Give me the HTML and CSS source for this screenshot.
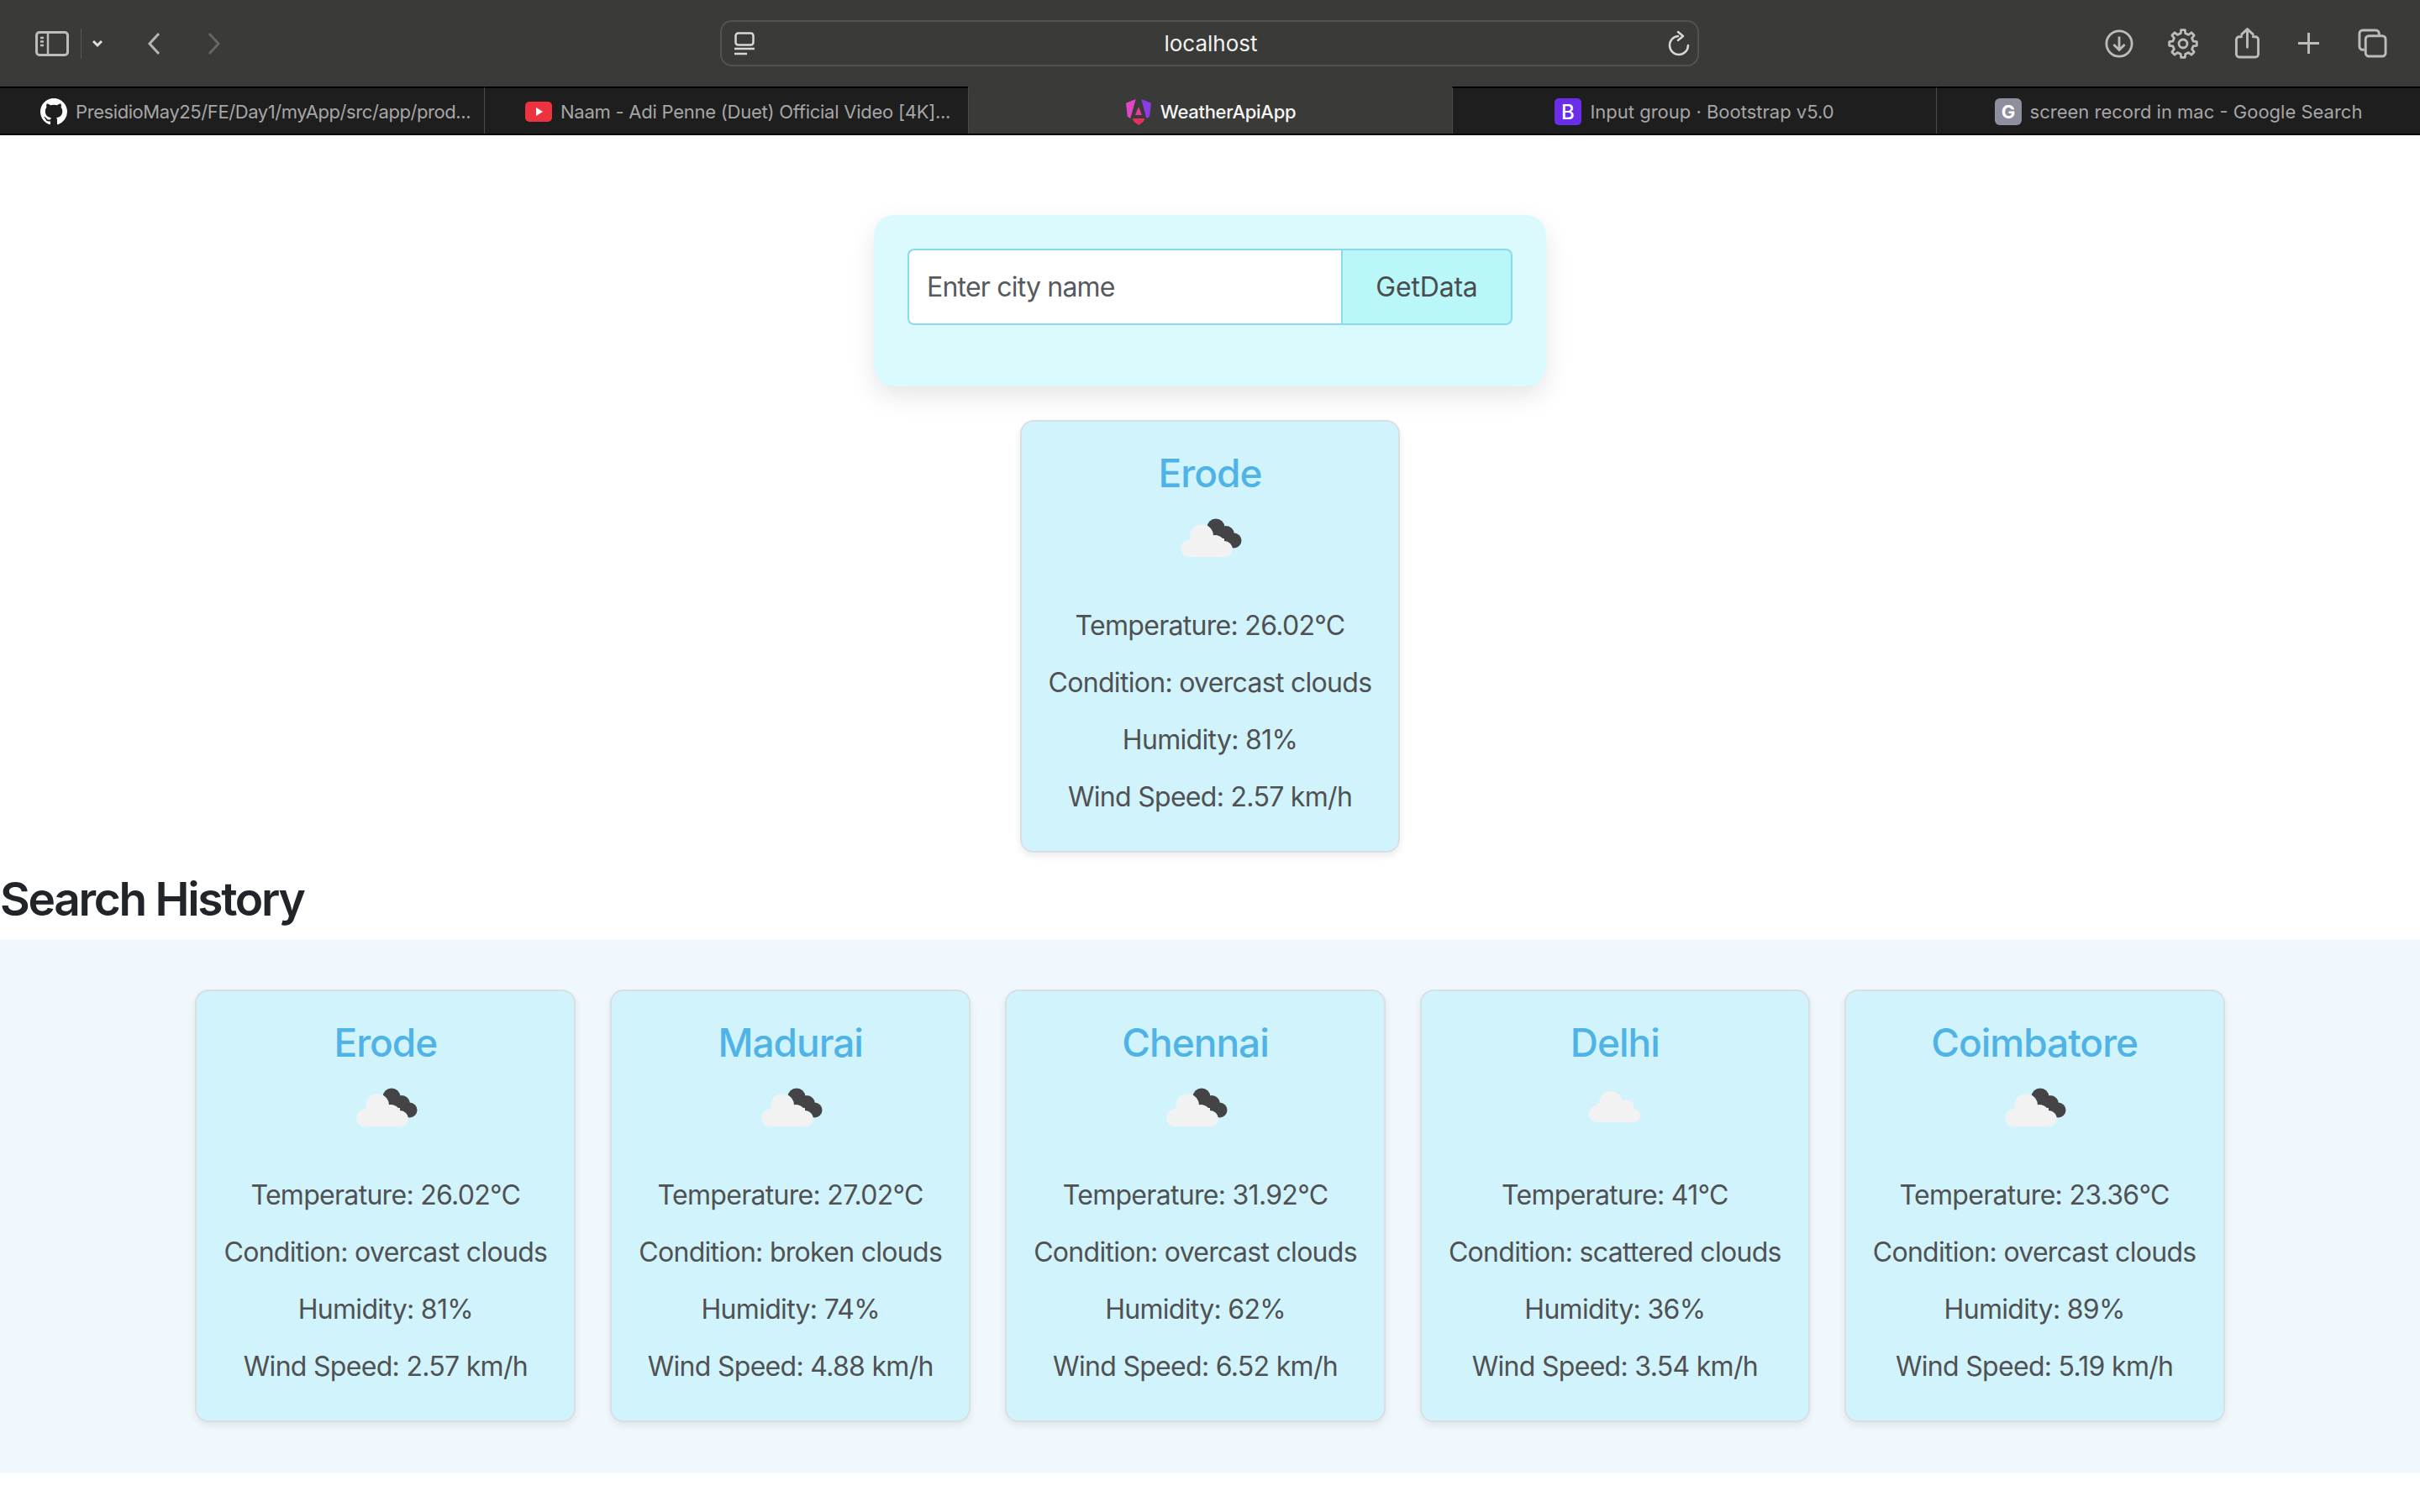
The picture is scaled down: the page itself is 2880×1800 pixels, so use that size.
FILE: index.html
```html
<!DOCTYPE html>
<html lang="en">
<head>
<meta charset="utf-8">
<title>WeatherApiApp</title>
<link rel="stylesheet" href="styles.css">
</head>
<body>
<svg class="defs" aria-hidden="true">
  <symbol id="cloud-broken" viewBox="0 0 100 100">
    <g class="dark-cloud"><circle cx="57" cy="37" r="10.500"/><circle cx="69" cy="45" r="10"/><circle cx="78.500" cy="52.500" r="9"/><path d="M50 38 L64 38 L80 58 L70 58Z"/></g>
    <g class="cloud-halo"><circle cx="40" cy="47" r="13"/><circle cx="26" cy="62" r="10"/><circle cx="56" cy="58" r="11"/><circle cx="67" cy="63" r="9"/></g>
    <g class="white-cloud"><circle cx="40" cy="47" r="13"/><circle cx="26" cy="62" r="10"/><circle cx="56" cy="58" r="11"/><circle cx="67" cy="63" r="9"/><rect x="26" y="50" width="41" height="22"/></g>
  </symbol>
  <symbol id="cloud-scattered" viewBox="0 0 100 100">
    <g class="white-cloud"><circle cx="45" cy="44" r="14"/><circle cx="63.500" cy="48" r="8"/><circle cx="72" cy="59" r="8"/><circle cx="28.500" cy="57" r="10"/><rect x="28" y="44" width="44" height="23"/></g>
  </symbol>
</svg>

<header class="browser">
  <div class="toolbar">
    <div class="tool-left">
      <svg class="ic ic-side" viewBox="0 0 40 30"><rect x="1.500" y="1.500" width="37" height="27" rx="3.500"/><path d="M15 2v26M6 8h4M6 12.500h4M6 17h4"/></svg>
      <span class="tool-sep"></span>
      <svg class="ic ic-chev" viewBox="0 0 14 10"><path d="M2 2l5 5 5-5"/></svg>
      <svg class="ic ic-back" viewBox="0 0 16 28"><path d="M14 2L3 14l11 12"/></svg>
      <svg class="ic ic-fwd" viewBox="0 0 16 28"><path d="M2 2l11 12L2 26"/></svg>
    </div>
    <div class="url">
      <svg class="ic ic-page" viewBox="0 0 24 28"><rect x="1.500" y="1.500" width="21" height="14" rx="3"/><path d="M0 20h24M0 26h15"/></svg>
      <span class="url-text">localhost</span>
      <svg class="ic ic-reload" viewBox="0 0 28 34"><path d="M25 19A11 11 0 1 1 13 8"/><path d="M13 3l6 5-6 5"/></svg>
    </div>
    <div class="tool-right">
      <svg class="ic ic-dl" viewBox="0 0 36 36"><circle cx="18" cy="18" r="16"/><path d="M18 9v17M11 19l7 7 7-7"/></svg>
      <svg class="ic ic-gear" viewBox="0 0 36 36"><path d="M15.190 5.820L15.700 1.660H20.300L20.810 5.820L24.620 7.400L27.930 4.820L31.180 8.070L28.600 11.380L30.180 15.190L34.340 15.700V20.300L30.180 20.810L28.600 24.620L31.180 27.930L27.930 31.180L24.620 28.600L20.810 30.180L20.300 34.340H15.700L15.190 30.180L11.380 28.600L8.070 31.180L4.820 27.930L7.400 24.620L5.820 20.810L1.660 20.300V15.700L5.820 15.190L7.400 11.380L4.820 8.070L8.070 4.820L11.380 7.400Z"/><circle cx="18" cy="18" r="5"/></svg>
      <svg class="ic ic-share" viewBox="0 0 30 38"><path d="M8 11H5a3.500 3.500 0 0 0-3.500 3.500v18A3.500 3.500 0 0 0 5 36h20a3.500 3.500 0 0 0 3.500-3.500v-18A3.500 3.500 0 0 0 25 11h-3M15 24V2M8 8l7-6.500L22 8"/></svg>
      <svg class="ic ic-plus" viewBox="0 0 28 28"><path d="M14 1v26M1 14h26"/></svg>
      <svg class="ic ic-tabs" viewBox="0 0 36 36"><path d="M8 26H6a4 4 0 0 1-4-4V6a4 4 0 0 1 4-4h16a4 4 0 0 1 4 4v2"/><rect x="9.500" y="9" width="24.500" height="25" rx="4"/></svg>
    </div>
  </div>
  <nav class="tabs">
    <div class="tab tab-trunc tab-github">
      <svg class="fav" viewBox="0 0 16 16"><path fill="#fff" d="M8 0C3.580 0 0 3.580 0 8c0 3.540 2.290 6.530 5.470 7.590.4.070.55-.17.55-.38 0-.19-.01-.82-.01-1.490-2.010.37-2.530-.49-2.690-.94-.09-.23-.48-.94-.82-1.130-.28-.15-.68-.52-.01-.53.630-.01 1.080.58 1.230.82.720 1.210 1.870.87 2.330.66.070-.52.280-.87.510-1.070-1.780-.2-3.640-.89-3.640-3.950 0-.87.310-1.590.820-2.150-.08-.2-.36-1.020.08-2.120 0 0 .67-.21 2.200.82.640-.18 1.320-.27 2-.27s1.360.09 2 .27c1.530-1.040 2.200-.82 2.200-.82.440 1.100.16 1.920.08 2.120.51.560.82 1.270.82 2.150 0 3.070-1.870 3.750-3.650 3.950.29.250.54.730.54 1.480 0 1.070-.01 1.930-.01 2.200 0 .21.150.46.550.38A8.010 8.010 0 0 0 16 8c0-4.420-3.580-8-8-8z"/></svg>
      <span>PresidioMay25/FE/Day1/myApp/src/app/prod...</span>
    </div>
    <div class="tab tab-trunc tab-video">
      <svg class="fav" viewBox="0 0 32 32"><rect y="4" width="32" height="24" rx="5" fill="#ee3340"/><path d="M13 11l8 5-8 5z" fill="#fff"/></svg>
      <span>Naam - Adi Penne (Duet) Official Video [4K]...</span>
    </div>
    <div class="tab tab-active">
      <svg class="fav" viewBox="0 0 32 32"><path d="M12.700 1L1 5.700 2.700 21.700 6.300 24z" fill="#e346c4"/><path d="M19.300 1L31 5.700 29 21.700 25.300 24z" fill="#8d3be6"/><path d="M16 10l-4 10h8z" fill="#e83a9e"/><path d="M8.700 24h14.600L22 27.700 16 32l-5.700-4.300z" fill="#e8305f"/></svg>
      <span>WeatherApiApp</span>
    </div>
    <div class="tab">
      <svg class="fav" viewBox="0 0 32 32"><rect width="32" height="32" rx="5" fill="#6a2de8"/><text x="16" y="25" class="fav-b">B</text></svg>
      <span>Input group · Bootstrap v5.0</span>
    </div>
    <div class="tab">
      <svg class="fav" viewBox="0 0 32 32"><rect width="32" height="32" rx="6" fill="#8d8f9c"/><text x="16" y="24" class="fav-g">G</text></svg>
      <span>screen record in mac - Google Search</span>
    </div>
  </nav>
</header>

<main class="page">
  <section class="search-wrap">
    <form class="search-box">
      <div class="input-group">
        <input class="city" type="text" placeholder="Enter city name">
        <button class="get" type="button">GetData</button>
      </div>
    </form>
  </section>

  <section class="current">
    <article class="card">
      <h3>Erode</h3>
      <svg class="wx"><use href="#cloud-broken"/></svg>
      <p>Temperature: 26.02°C</p>
      <p>Condition: overcast clouds</p>
      <p>Humidity: 81%</p>
      <p>Wind Speed: 2.57 km/h</p>
    </article>
  </section>

  <h2 class="history-title">Search History</h2>
  <section class="history">
    <article class="card">
      <h3>Erode</h3>
      <svg class="wx"><use href="#cloud-broken"/></svg>
      <p>Temperature: 26.02°C</p>
      <p>Condition: overcast clouds</p>
      <p>Humidity: 81%</p>
      <p>Wind Speed: 2.57 km/h</p>
    </article>
    <article class="card">
      <h3>Madurai</h3>
      <svg class="wx"><use href="#cloud-broken"/></svg>
      <p>Temperature: 27.02°C</p>
      <p>Condition: broken clouds</p>
      <p>Humidity: 74%</p>
      <p>Wind Speed: 4.88 km/h</p>
    </article>
    <article class="card">
      <h3>Chennai</h3>
      <svg class="wx"><use href="#cloud-broken"/></svg>
      <p>Temperature: 31.92°C</p>
      <p>Condition: overcast clouds</p>
      <p>Humidity: 62%</p>
      <p>Wind Speed: 6.52 km/h</p>
    </article>
    <article class="card">
      <h3>Delhi</h3>
      <svg class="wx"><use href="#cloud-scattered"/></svg>
      <p>Temperature: 41°C</p>
      <p>Condition: scattered clouds</p>
      <p>Humidity: 36%</p>
      <p>Wind Speed: 3.54 km/h</p>
    </article>
    <article class="card">
      <h3>Coimbatore</h3>
      <svg class="wx"><use href="#cloud-broken"/></svg>
      <p>Temperature: 23.36°C</p>
      <p>Condition: overcast clouds</p>
      <p>Humidity: 89%</p>
      <p>Wind Speed: 5.19 km/h</p>
    </article>
  </section>
</main>
</body>
</html>
```
FILE: styles.css
```css
* { box-sizing: border-box; }
html, body { margin: 0; padding: 0; }
body {
  width: 2880px;
  height: 1800px;
  overflow: hidden;
  background: #fff;
  font-family: Inter, "Liberation Sans", sans-serif;
}
.defs { position: absolute; width: 0; height: 0; }
.dark-cloud { fill: #444446; }
.cloud-halo { fill: #d1f3fb; stroke: #e4f5f8; stroke-width: 2; }
.white-cloud { fill: #f2f2f2; }

/* browser chrome */
.browser { height: 161px; background: #000; }
.toolbar {
  height: 103px;
  background: #3a3a38;
  display: flex;
  align-items: center;
}
.ic { fill: none; stroke: #bcbcba; stroke-width: 3; flex: none; display: block; }
.tool-left { display: flex; align-items: center; padding-left: 42px; width: 857px; }
.ic-side { width: 40px; height: 30px; }
.ic-side path { stroke-width: 2.500; }
.tool-sep { width: 1px; height: 36px; background: #575755; margin-left: 14px; }
.ic-chev { width: 14px; height: 10px; margin-left: 12px; stroke-width: 3; stroke: #e0e0de; }
.ic-back { width: 16px; height: 28px; margin-left: 52px; stroke: #b5b5b3; }
.ic-fwd { width: 16px; height: 28px; margin-left: 56px; stroke: #666664; }
.url {
  width: 1165px;
  height: 55px;
  border: 2px solid #525250;
  border-radius: 14px;
  display: flex;
  align-items: center;
  padding: 0 8px 0 15px;
  justify-content: space-between;
}
.ic-page { width: 24px; height: 28px; stroke: #d8d8d6; stroke-width: 2.500; }
.ic-reload { width: 28px; height: 34px; stroke: #d8d8d6; stroke-width: 2.500; stroke-linecap: round; stroke-linejoin: round; }
.url-text { color: #f2f2f2; font-size: 26px; font-weight: 400; }
.tool-right { display: flex; align-items: center; padding-left: 483px; }
.ic-dl { width: 34px; height: 34px; }
.ic-gear { width: 36px; height: 36px; margin-left: 41px; stroke-linejoin: round; stroke-width: 2.800; }
.ic-share { width: 29px; height: 37px; margin-left: 44px; stroke-linecap: round; }
.ic-plus { width: 27px; height: 27px; margin-left: 45px; }
.ic-tabs { width: 35px; height: 35px; margin-left: 45px; }

.tabs { height: 56px; display: grid; grid-template-columns: repeat(5, 576px); }
.tab {
  background: #1e1e1e;
  color: #a6a6a6;
  font-size: 22px;
  display: flex;
  align-items: center;
  justify-content: center;
  gap: 10px;
  padding-top: 1px;
  border-top: 2px solid #000;
  border-left: 1px solid #4a4a48;
  white-space: nowrap;
  overflow: hidden;
}
.tab:first-child { border-left: 0; }
.tab-trunc { justify-content: flex-start; padding-left: 48px; }
.tab-github { letter-spacing: -.42px; }
.tab-video { letter-spacing: -.25px; }
.tab-active { background: #3a3a38; border-top: 2px solid #3a3a38; color: #f5f5f5; font-weight: 500; letter-spacing: -.3px; }
.fav { width: 32px; height: 32px; flex: none; }
.fav-b { fill: #fff; font: 500 24px Inter, sans-serif; text-anchor: middle; }
.fav-g { fill: #fff; font: 700 22px Inter, sans-serif; text-anchor: middle; }

/* page */
.page { background: #fff; }
.search-wrap { display: flex; justify-content: center; padding-top: 95px; }
.search-box {
  width: 800px;
  height: 204px;
  padding: 40px;
  margin: 0;
  background: #dafafd;
  border-radius: 24px;
  box-shadow: 0 12px 30px rgba(0, 0, 0, .1);
}
.input-group { display: flex; height: 91px; }
.city {
  flex: 1;
  min-width: 0;
  border: 2px solid #8bd9ef;
  border-right: 0;
  border-radius: 8px 0 0 8px;
  padding: 0 21px;
  font: 400 32px Inter, sans-serif;
  letter-spacing: -.8px;
  color: #444;
  background: #fff;
}
.city::placeholder { color: #565a5e; opacity: 1; }
.get {
  width: 204px;
  border: 2px solid #8bd9ef;
  border-radius: 0 8px 8px 0;
  background: #baf7f8;
  color: #4a4d4f;
  font: 400 32px Inter, sans-serif;
  letter-spacing: -.2px;
}
.current { display: flex; justify-content: center; padding-top: 40px; }
.card {
  background: #d1f3fb;
  border: 2px solid #d9e0e3;
  border-radius: 16px;
  box-shadow: 0 4px 8px rgba(0, 0, 0, .08);
  padding: 33px 32px 22px;
  text-align: center;
  height: 515px;
}
.card h3 {
  margin: 0;
  font-size: 46px;
  line-height: 56px;
  font-weight: 500;
  letter-spacing: -1px;
  color: #4fb3e8;
}
.card .wx { display: block; width: 100px; height: 100px; margin: 0 auto 30px; filter: blur(.6px); }
.card p {
  margin: 0 0 20px;
  font-size: 32px;
  line-height: 48px;
  letter-spacing: -.7px;
  color: #4f5153;
  white-space: nowrap;
}
.history-title {
  margin: 15px 0 0;
  height: 88px;
  font-size: 55px;
  line-height: 80px;
  font-weight: 600;
  letter-spacing: -2.300px;
  color: #212529;
}
.history {
  height: 636px;
  background: #f0f8fe;
  padding-top: 60px;
  display: flex;
  justify-content: center;
  gap: 41px;
}
```
